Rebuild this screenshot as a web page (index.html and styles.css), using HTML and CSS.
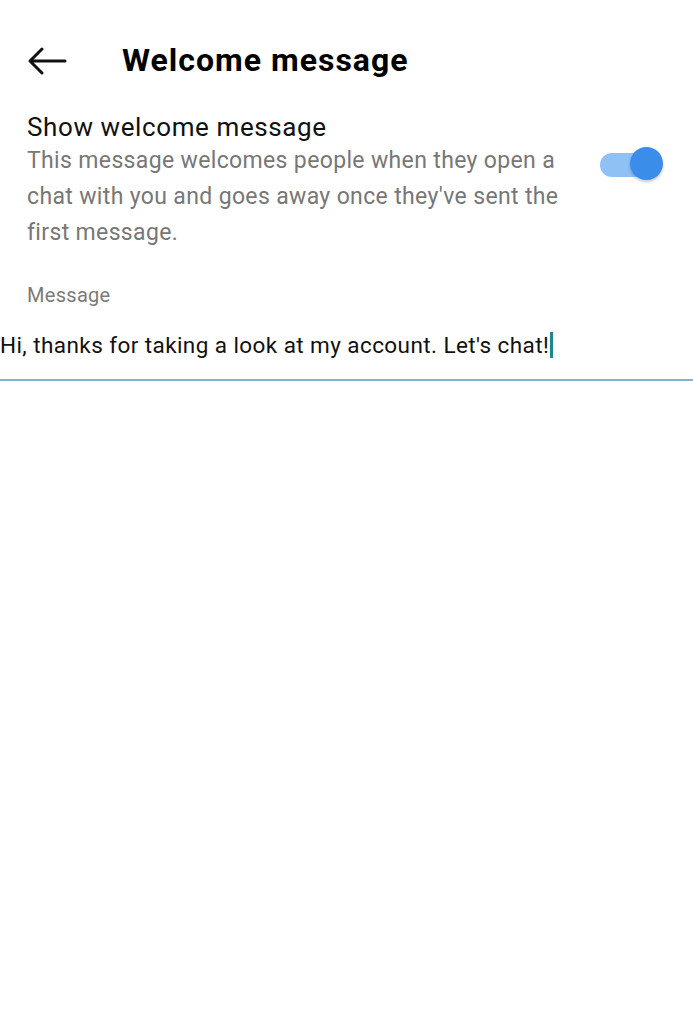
FILE: index.html
```html
<!DOCTYPE html>
<html>
<head>
<meta charset="utf-8">
<link rel="stylesheet" href="styles.css">
</head>
<body>
<div class="page">
  <header class="topbar">
    <svg class="back" width="40" height="30" viewBox="0 0 40 30">
      <path d="M38 15H3M15 3L3 15L15 27" fill="none" stroke="#111" stroke-width="3" stroke-linecap="round" stroke-linejoin="round"/>
    </svg>
    <h1 class="title">Welcome message</h1>
  </header>
  <section class="setting">
    <div class="setting-text">
      <div class="setting-title">Show welcome message</div>
      <div class="setting-desc">This message welcomes people when they open a chat with you and goes away once they've sent the first message.</div>
    </div>
    <div class="toggle"><div class="track"></div><div class="knob"></div></div>
  </section>
  <div class="field-label">Message</div>
  <div class="field">
    <span class="field-text">Hi, thanks for taking a look at my account. Let's chat!</span><span class="caret"></span>
  </div>
</div>
</body>
</html>
```
FILE: styles.css
```css
* { box-sizing: border-box; }
html, body { margin: 0; padding: 0; background: #fff; }
body { font-family: Roboto, "Noto Sans", sans-serif; color: #111; }
.page { width: 693px; }
.topbar { display: flex; align-items: center; padding: 40px 0 0 27px; height: 80px; }
.back { flex: none; margin-top: 1px; }
.title { margin: 0 0 0 55px; font-size: 32px; line-height: 40px; font-weight: 700; color: #000; letter-spacing: 1px; }
.setting { display: flex; padding: 32px 0 0 27px; }
.setting-text { width: 540px; flex: none; }
.setting-title { font-size: 26px; line-height: 30px; color: #111; letter-spacing: 0.6px; }
.setting-desc { font-size: 23px; line-height: 36px; color: #777; margin-top: 1px; letter-spacing: 0.35px; }
.toggle { position: relative; flex: none; width: 64px; height: 34px; margin: 35px 0 0 33px; }
.track { position: absolute; left: 0; top: 6px; width: 46px; height: 24px; border-radius: 12px; background: #90c1f5; }
.knob { position: absolute; left: 30px; top: 0; width: 33px; height: 33px; border-radius: 50%; background: #3a8eea; box-shadow: 0 2px 3px rgba(0,0,0,0.22); }
.field-label { padding: 32px 0 0 27px; font-size: 20px; line-height: 24px; color: #7a7a7a; letter-spacing: 0.3px; }
.field { display: flex; align-items: center; height: 74px; padding: 4px 0 0; border-bottom: 2px solid #82b3c8; }
.field-text { font-size: 22.5px; line-height: 30px; color: #111; letter-spacing: 0.42px; }
.caret { display: inline-block; width: 3px; height: 26px; background: #1d8a8a; margin-left: 1px; }
```
